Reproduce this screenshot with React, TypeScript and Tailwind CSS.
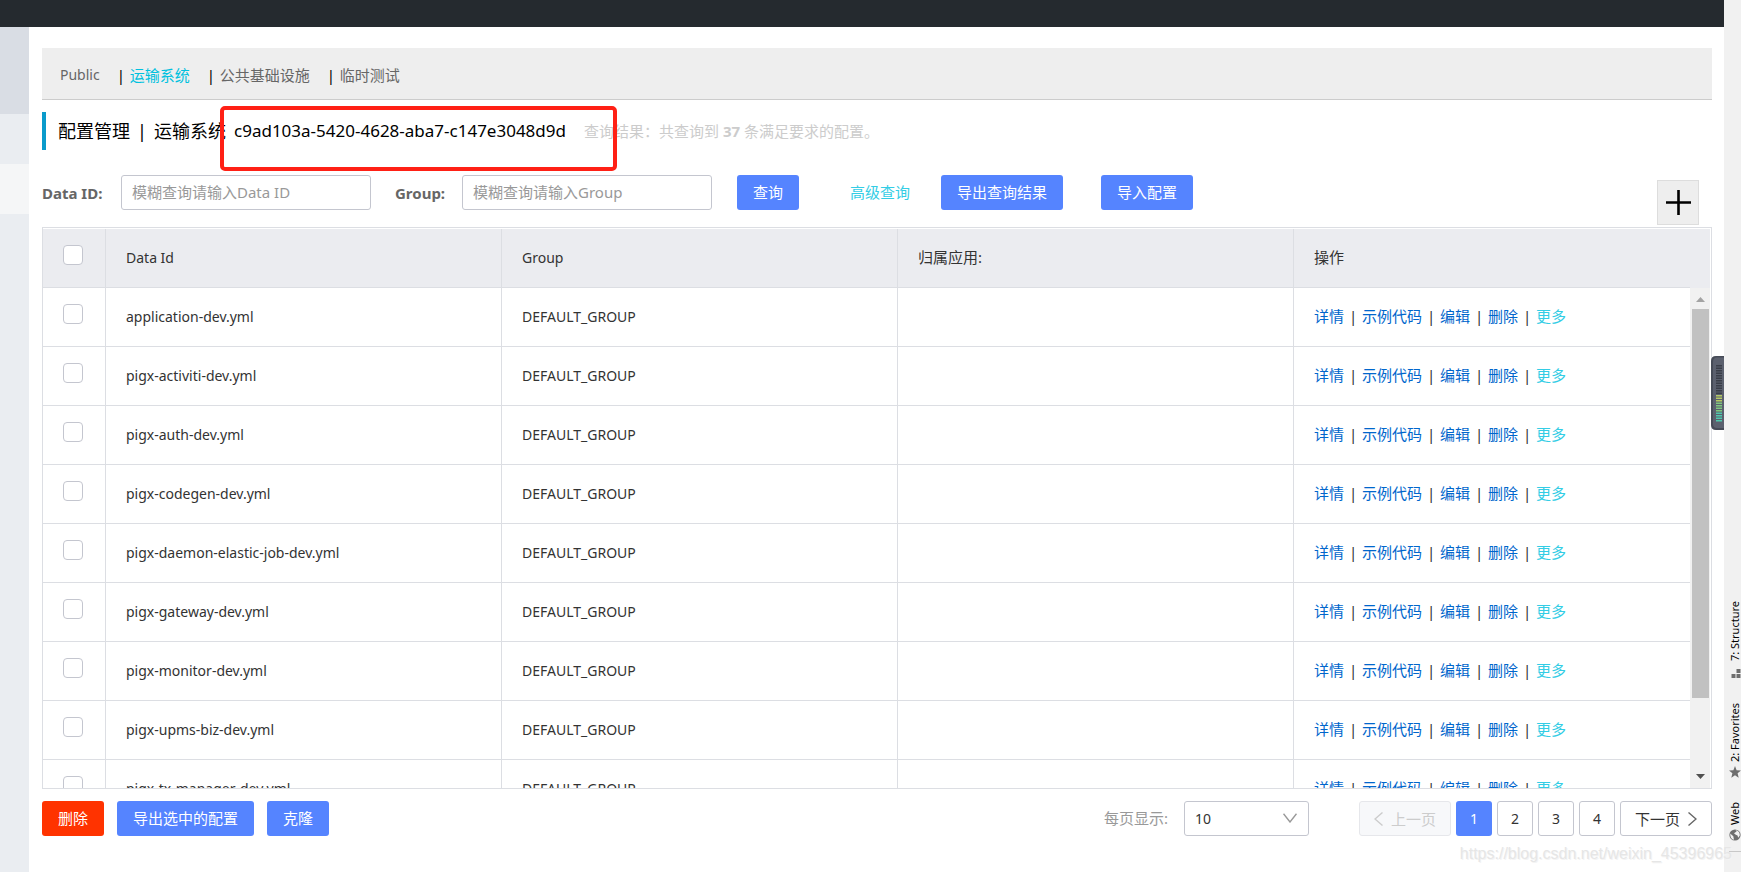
import { Fragment, type ReactNode } from 'react'

const files = [
  'application-dev.yml',
  'pigx-activiti-dev.yml',
  'pigx-auth-dev.yml',
  'pigx-codegen-dev.yml',
  'pigx-daemon-elastic-job-dev.yml',
  'pigx-gateway-dev.yml',
  'pigx-monitor-dev.yml',
  'pigx-upms-biz-dev.yml',
  'pigx-tx-manager-dev.yml',
]

const namespaces = ['Public', '运输系统', '公共基础设施', '临时测试']
const actions = ['详情', '示例代码', '编辑', '删除', '更多']

function Button({ children, danger = false }: { children: ReactNode; danger?: boolean }) {
  return (
    <button
      type="button"
      className={`h-[35px] shrink-0 rounded-[3px] px-4 pb-0.5 text-[15px] whitespace-nowrap text-white ${danger ? 'bg-[#ff3300]' : 'bg-[#5584ff]'}`}
    >
      {children}
    </button>
  )
}

function Checkbox({ label }: { label: string }) {
  return (
    <input
      type="checkbox"
      aria-label={label}
      className="block size-5 appearance-none rounded-[4px] border border-[#c4c6cf] bg-white checked:bg-[#5584ff]"
    />
  )
}

function NamespaceTabs() {
  return (
    <nav className="flex h-[52px] items-center border-b border-[#ccc] bg-[#eee] px-[18px] pt-0.5 text-[#666]">
      {namespaces.map((name, i) => (
        <Fragment key={name}>
          {i > 0 && <span className="ml-[17px] w-[13px] text-left text-black">|</span>}
          <a href="#" className={i === 0 ? 'text-[14px]' : i === 1 ? 'text-[#00c1de]' : ''}>
            {name}
          </a>
        </Fragment>
      ))}
    </nav>
  )
}

function Title() {
  return (
    <div className="relative mt-3 flex h-[38px] items-center border-l-4 border-[#0a9bcb] pl-3">
      <h1 className="flex items-center text-[18px] whitespace-nowrap text-black">
        <span>配置管理</span>
        <span className="w-6 text-center">|</span>
        <span>运输系统</span>
        <span className="ml-2 text-[17px]">c9ad103a-5420-4628-aba7-c147e3048d9d</span>
      </h1>
      <p className="ml-[18px] whitespace-nowrap text-[#ccc]">
        查询结果：共查询到 <strong>37</strong> 条满足要求的配置。
      </p>
      <div className="pointer-events-none absolute -top-1.5 left-[174px] h-[65px] w-[397px] rounded-[5px] border-4 border-[#ff2015]" />
    </div>
  )
}

function SearchBar() {
  const input =
    'h-[35px] w-[250px] rounded-[3px] border border-[#c4c6cf] bg-white px-[10px] pb-0.5 text-[#333] placeholder:text-[#999]'
  return (
    <form className="mt-[25px] flex items-start pb-0.5">
      <div className="flex h-[35px] items-center">
        <label htmlFor="dataId" className="w-[79px] font-bold whitespace-nowrap text-[#666]">
          Data ID:
        </label>
        <input id="dataId" className={input} placeholder="模糊查询请输入Data ID" />
        <label htmlFor="group" className="ml-6 w-[67px] font-bold whitespace-nowrap text-[#666]">
          Group:
        </label>
        <input id="group" className={`${input} mr-[25px]`} placeholder="模糊查询请输入Group" />
        <Button>查询</Button>
        <a href="#" className="mr-[31px] ml-[51px] pb-0.5 whitespace-nowrap text-[#33cde5]">
          高级查询
        </a>
        <Button>导出查询结果</Button>
        <span className="w-[38px]" />
        <Button>导入配置</Button>
      </div>
      <button
        type="button"
        aria-label="新建配置"
        className="mt-[5px] mr-[13px] ml-auto flex h-[45px] w-[42px] items-center justify-center border border-[#ddd] bg-[#eee]"
      >
        <svg viewBox="0 0 25 25" className="size-[25px]" stroke="#000" strokeWidth="2.6">
          <path d="M0 12.5H25M12.5 0V25" />
        </svg>
      </button>
    </form>
  )
}

function Scrollbar() {
  return (
    <div className="flex w-5 flex-1 flex-col bg-[#f1f1f1]" aria-hidden="true">
      <svg viewBox="0 0 20 21" className="h-[21px] w-5">
        <path d="M6 14L10.500 9L15 14Z" fill="#a3a3a3" />
      </svg>
      <div className="ml-0.5 h-[389px] w-[17px] bg-[#c1c1c1]" />
      <svg viewBox="0 0 20 21" className="mt-auto h-[21px] w-5">
        <path d="M6 7L10.500 12L15 7Z" fill="#505050" />
      </svg>
    </div>
  )
}

function ConfigTable() {
  const head = 'sticky top-0 h-[59px] border-b border-[#dcdee3] bg-[#ebecf0] text-left font-normal text-[#333]'
  const cell = 'h-[59px] border-b border-[#dcdee3]'
  return (
    <div className="flex h-[562px] border border-[#dcdee3] pt-px pr-px">
      <div className="flex-1 overflow-y-auto [scrollbar-width:none]">
        <table className="w-full table-fixed border-separate border-spacing-0">
          <thead>
            <tr>
              <th className={`${head} w-[63px] border-r pt-4 pl-5 align-top`}>
                <Checkbox label="全选" />
              </th>
              <th className={`${head} border-r px-5 text-[14px]`}>Data Id</th>
              <th className={`${head} border-r px-5 text-[14px]`}>Group</th>
              <th className={`${head} border-r px-5 pb-0.5`}>归属应用:</th>
              <th className={`${head} px-5 pb-0.5`}>操作</th>
            </tr>
          </thead>
          <tbody className="text-[#333]">
            {files.map((file) => (
              <tr key={file}>
                <td className={`${cell} border-r pt-4 pl-5 align-top`}>
                  <Checkbox label={file} />
                </td>
                <td className={`${cell} border-r px-5 text-[14px]`}>{file}</td>
                <td className={`${cell} border-r px-5 text-[14px]`}>DEFAULT_GROUP</td>
                <td className={`${cell} border-r px-5`} />
                <td className={`${cell} px-5 pb-0.5`}>
                  <div className="flex whitespace-nowrap">
                    {actions.map((action, i) => (
                      <Fragment key={action}>
                        {i > 0 && <span className="w-[18px] text-center">|</span>}
                        <a href="#" className={i === 4 ? 'text-[#33cde5]' : 'text-[#0066cc]'}>
                          {action}
                        </a>
                      </Fragment>
                    ))}
                  </div>
                </td>
              </tr>
            ))}
          </tbody>
        </table>
      </div>
      <div className="flex flex-col">
        <div className="h-[59px] bg-[#ebecf0]" />
        <Scrollbar />
      </div>
    </div>
  )
}

function Footer() {
  const page = 'h-[35px] rounded-[3px] border border-[#c4c6cf] text-[#333]'
  return (
    <div className="mt-3 flex items-center">
      <div className="flex gap-[13px]">
        <Button danger>删除</Button>
        <Button>导出选中的配置</Button>
        <Button>克隆</Button>
      </div>
      <label htmlFor="pageSize" className="mr-4 ml-auto pb-0.5 whitespace-nowrap text-[#999]">
        每页显示:
      </label>
      <div className="relative">
        <select
          id="pageSize"
          className="h-[35px] w-[125px] appearance-none rounded-[3px] border border-[#c4c6cf] bg-white px-[10px] text-[14px] text-[#333]"
        >
          <option>10</option>
          <option>20</option>
          <option>50</option>
        </select>
        <svg
          viewBox="0 0 14 10"
          className="pointer-events-none absolute top-[12px] right-3 h-[10px] w-[14px]"
          fill="none"
          stroke="#999"
          strokeWidth="1.4"
        >
          <path d="M0.500 0.800L7 9L13.500 0.800" />
        </svg>
      </div>
      <nav className="ml-[50px] flex gap-[5px]">
        <button
          type="button"
          disabled
          className="flex h-[35px] w-[92px] items-center justify-center gap-2 rounded-[3px] border border-[#e6e7eb] bg-[#f7f8fa] whitespace-nowrap text-[#ccc]"
        >
          <svg viewBox="0 0 9 14" className="h-[14px] w-[9px]" fill="none" stroke="currentColor" strokeWidth="1.4">
            <path d="M8.500 0.500L1 7L8.500 13.500" />
          </svg>
          上一页
        </button>
        <button type="button" className="h-[35px] w-9 rounded-[3px] bg-[#5584ff] text-[14px] text-white">
          1
        </button>
        {[2, 3, 4].map((n) => (
          <button key={n} type="button" className={`${page} w-9 text-[14px]`}>
            {n}
          </button>
        ))}
        <button
          type="button"
          className={`${page} flex w-[92px] items-center justify-center gap-2 whitespace-nowrap`}
        >
          下一页
          <svg viewBox="0 0 9 14" className="h-[14px] w-[9px]" fill="none" stroke="#666" strokeWidth="1.4">
            <path d="M0.500 0.500L8 7L0.500 13.500" />
          </svg>
        </button>
      </nav>
    </div>
  )
}

function ToolLabel({ children }: { children: ReactNode }) {
  return (
    <span className="rotate-180 text-[11px] leading-[12px] whitespace-nowrap text-black [writing-mode:vertical-rl]">
      {children}
    </span>
  )
}

function ToolStrip() {
  return (
    <aside className="flex w-[17px] shrink-0 flex-col items-end justify-end overflow-hidden bg-[#f1f1f1]">
      <ToolLabel>7: Structure</ToolLabel>
      <svg viewBox="0 0 10 10" className="mt-2 mb-6 h-[10px] w-[10px] shrink-0" fill="#6e6e6e">
        <path d="M5.500 0h4v4h-4zM0.500 5h4v4h-4zM5.500 5h4v4h-4z" />
      </svg>
      <ToolLabel>2: Favorites</ToolLabel>
      <svg viewBox="0 0 12 12" className="mt-1 mb-6 size-3 shrink-0" fill="#6e6e6e">
        <path d="M6 0L7.600 4.200L12 4.500L8.600 7.300L9.700 11.700L6 9.300L2.300 11.700L3.400 7.300L0 4.500L4.400 4.200Z" />
      </svg>
      <ToolLabel>Web</ToolLabel>
      <svg viewBox="0 0 12 12" className="mt-1 mb-2.5 size-3 shrink-0">
        <circle cx="6" cy="6" r="5.600" fill="#6e6e6e" />
        <path d="M1.200 4.500L4.300 7.300L5 10.800C2.800 10.300 1 8.300 1.200 4.500ZM6.500 1.300L7.600 2.400L5 4.200L6.800 5.800L8.500 6.400L9.200 8.700L10.800 6.500C11 3.500 9 1.500 6.500 1.300Z" fill="#f1f1f1" />
      </svg>
      <div className="mb-5 h-px w-3 shrink-0 bg-[#c8c8c8]" />
    </aside>
  )
}

function LevelMeter() {
  const bars = Array.from({ length: 23 }, (_, i) => i)
  return (
    <svg viewBox="0 0 13 74" className="absolute top-[356px] right-[17px] h-[74px] w-[13px]" aria-hidden="true">
      <path d="M13 0H5Q0 0 0 5V69Q0 74 5 74H13Z" fill="#464b57" />
      <path d="M13 1.500H6Q2 1.500 2 6V68Q2 72 6 72H13Z" fill="#5b606e" />
      {bars.map((i) => (
        <rect
          key={i}
          x="5"
          y={9 + i * 2.5}
          width="6"
          height="1.500"
          fill={i < 12 ? '#3a3e49' : i < 15 ? '#b5c965' : i < 19 ? '#7fc77f' : '#4fc7ac'}
        />
      ))}
    </svg>
  )
}

export default function App() {
  return (
    <div className="relative flex min-h-screen bg-white font-['Noto_Sans','Noto_Sans_CJK_SC',sans-serif] text-[15px] leading-5">
      <div className="flex min-w-0 flex-1 flex-col">
        <header className="h-[27px] bg-[#252a2f]" />
        <div className="flex flex-1">
          <aside className="flex w-[29px] shrink-0 flex-col bg-[#eaedf1]">
            <div className="h-[87px] bg-[#d9dde4]" />
            <div className="h-[50px]" />
            <div className="h-[50px] bg-[#f5f6f7]" />
          </aside>
          <main className="min-w-0 flex-1 pt-[21px] pr-3 pl-[13px]">
            <NamespaceTabs />
            <Title />
            <SearchBar />
            <ConfigTable />
            <Footer />
          </main>
        </div>
      </div>
      <ToolStrip />
      <LevelMeter />
      <div className="pointer-events-none absolute right-[9px] bottom-2 font-['Liberation_Sans',sans-serif] text-[16px] text-[#e6e6e6] [text-shadow:1px_1px_0_#f4f4f4]">
        https://blog.csdn.net/weixin_45396965
      </div>
    </div>
  )
}
